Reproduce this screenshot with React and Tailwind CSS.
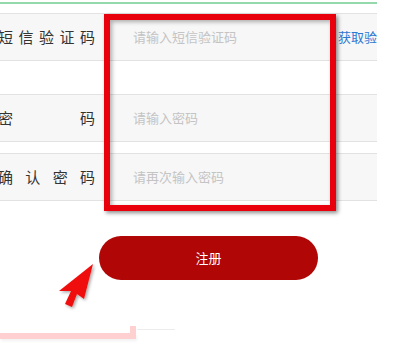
import React from 'react';

const font = { fontFamily: '"Noto Sans CJK SC", "Noto Sans", sans-serif' };

const Label = ({ chars }) => (
  <div className="w-[97px] -ml-[2px] flex justify-between text-[15px] text-[#333] shrink-0">
    {chars.map((c, i) => (
      <span key={i}>{c}</span>
    ))}
  </div>
);

const Row = ({ chars, placeholder, extra }) => (
  <div className="h-[48px] flex items-center bg-[#f7f7f7] border-y border-[#e2e2e2] overflow-hidden">
    <Label chars={chars} />
    <div className="ml-[38px] w-[205px] shrink-0 text-[13px] text-[#c4c4c4] whitespace-nowrap">{placeholder}</div>
    {extra}
  </div>
);

export default function App() {
  return (
    <div className="relative w-[401px] h-[351px] overflow-hidden bg-white" style={font}>
      <div className="mt-[2px] h-[2px] w-[377px] bg-[#93d9ac]" />
      <div className="mt-[9px] w-[377px] flex flex-col">
        <Row
          chars={['短', '信', '验', '证', '码']}
          placeholder="请输入短信验证码"
          extra={<div className="text-[13px] text-[#2f78d2] whitespace-nowrap">获取验证码</div>}
        />
        <div className="h-[33px]" />
        <Row chars={['密', '码']} placeholder="请输入密码" />
        <div className="h-[11px]" />
        <Row chars={['确', '认', '密', '码']} placeholder="请再次输入密码" />
      </div>
      <div className="mt-[35px] ml-[99px] w-[219px] h-[44px] rounded-full bg-[#b00606] flex items-center justify-center text-white text-[13px]">
        注册
      </div>

      {/* annotation box */}
      <div className="absolute left-[104px] top-[14px] w-[232px] h-[197px] border-[6px] border-[#e8000c] shadow-[2px_2px_4px_rgba(0,0,0,0.45),inset_2px_2px_4px_rgba(0,0,0,0.3)]" />

      {/* annotation arrow */}
      <svg className="absolute left-[55px] top-[258px]" width="45" height="54" viewBox="0 0 45 54">
        <defs>
          <filter id="sh" x="-30%" y="-30%" width="160%" height="160%">
            <feDropShadow dx="1.5" dy="1.5" stdDeviation="1.5" floodColor="#000" floodOpacity="0.35" />
          </filter>
        </defs>
        <polygon points="38,6 29,41 22,36 17,49 10,46 16,33 4,33" fill="#f01010" filter="url(#sh)" />
      </svg>

      {/* faded box corner at bottom */}
      <div className="absolute left-0 top-[333px] w-[136px] h-[6px] bg-[#ffd0d0] shadow-[1px_2px_3px_rgba(0,0,0,0.06)]" />
      <div className="absolute left-[130px] top-[326px] w-[6px] h-[13px] bg-[#ffd0d0]" />
      <div className="absolute left-[137px] top-[329px] w-[38px] h-px bg-[#ececec]" />
    </div>
  );
}
